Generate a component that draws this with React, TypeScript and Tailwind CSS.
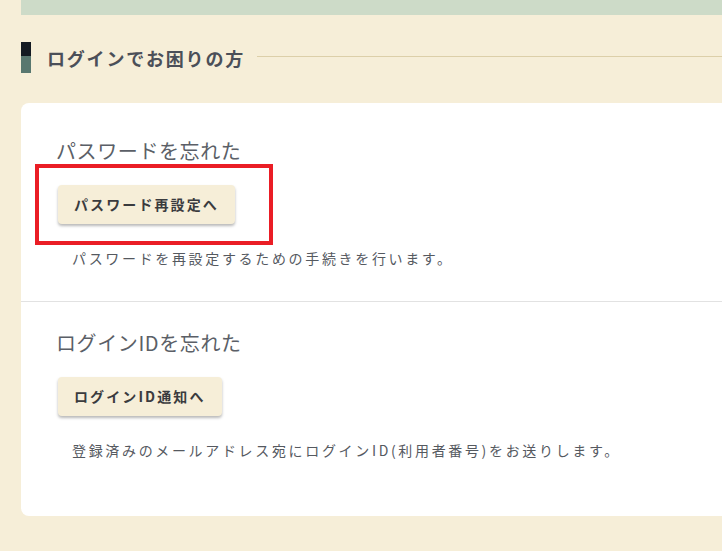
import React from 'react'

interface HelpItem {
  title: string
  button: string
  description: string
}

const items: HelpItem[] = [
  {
    title: 'パスワードを忘れた',
    button: 'パスワード再設定へ',
    description: 'パスワードを再設定するための手続きを行います。',
  },
  {
    title: 'ログインIDを忘れた',
    button: 'ログインID通知へ',
    description: '登録済みのメールアドレス宛にログインID(利用者番号)をお送りします。',
  },
]

function HelpSection({ item, first }: { item: HelpItem; first?: boolean }) {
  return (
    <div
      className={`pl-[35px] ${
        first ? 'pt-[33px] pb-[32px] border-b border-[#e2e2e2]' : 'pt-[26px] pb-[55px]'
      }`}
    >
      <h3 className="text-[20px] leading-[30px] tracking-[0.03em] text-[#5b5f67] font-normal">
        {item.title}
      </h3>
      <button className="mt-[19px] ml-[2px] h-[39px] px-[16px] rounded-[4px] bg-[#f6eed8] text-[14px] font-bold tracking-[0.15em] text-[#3a3b3e] shadow-[0_2px_3px_rgba(0,0,0,0.28)]">
        {item.button}
      </button>
      <p className="mt-[23px] ml-[16px] text-[14px] leading-[22px] tracking-[0.19em] text-[#55595f]">
        {item.description}
      </p>
    </div>
  )
}

export default function App() {
  return (
    <div className="w-[722px] h-[551px] overflow-hidden bg-[#f6eed8] font-['Noto_Sans_CJK_JP','Noto_Sans',sans-serif]">
      <div className="ml-[21px] w-[760px]">
        {/* top band */}
        <div className="h-[15px] bg-[#cddbc8]" />

        {/* heading */}
        <div className="mt-[27px] flex items-center h-[31px]">
          <div className="flex flex-col w-[10px] h-[31px]">
            <div className="h-[14px] bg-[#141a22]" />
            <div className="flex-1 bg-[#58776f]" />
          </div>
          <h2 className="ml-[16px] text-[18px] font-bold tracking-[0.1em] text-[#4b4f58] leading-none">
            ログインでお困りの方
          </h2>
          <div className="ml-[12px] flex-1 h-px bg-[#dccfa9] -translate-y-[1px]" />
        </div>

        {/* card */}
        <div className="relative mt-[30px] bg-white rounded-[8px]">
          <HelpSection item={items[0]} first />
          <HelpSection item={items[1]} />
          <div className="absolute left-[14px] top-[61px] w-[238px] h-[81px] border-4 border-[#ea1d25]" />
        </div>
      </div>
    </div>
  )
}
